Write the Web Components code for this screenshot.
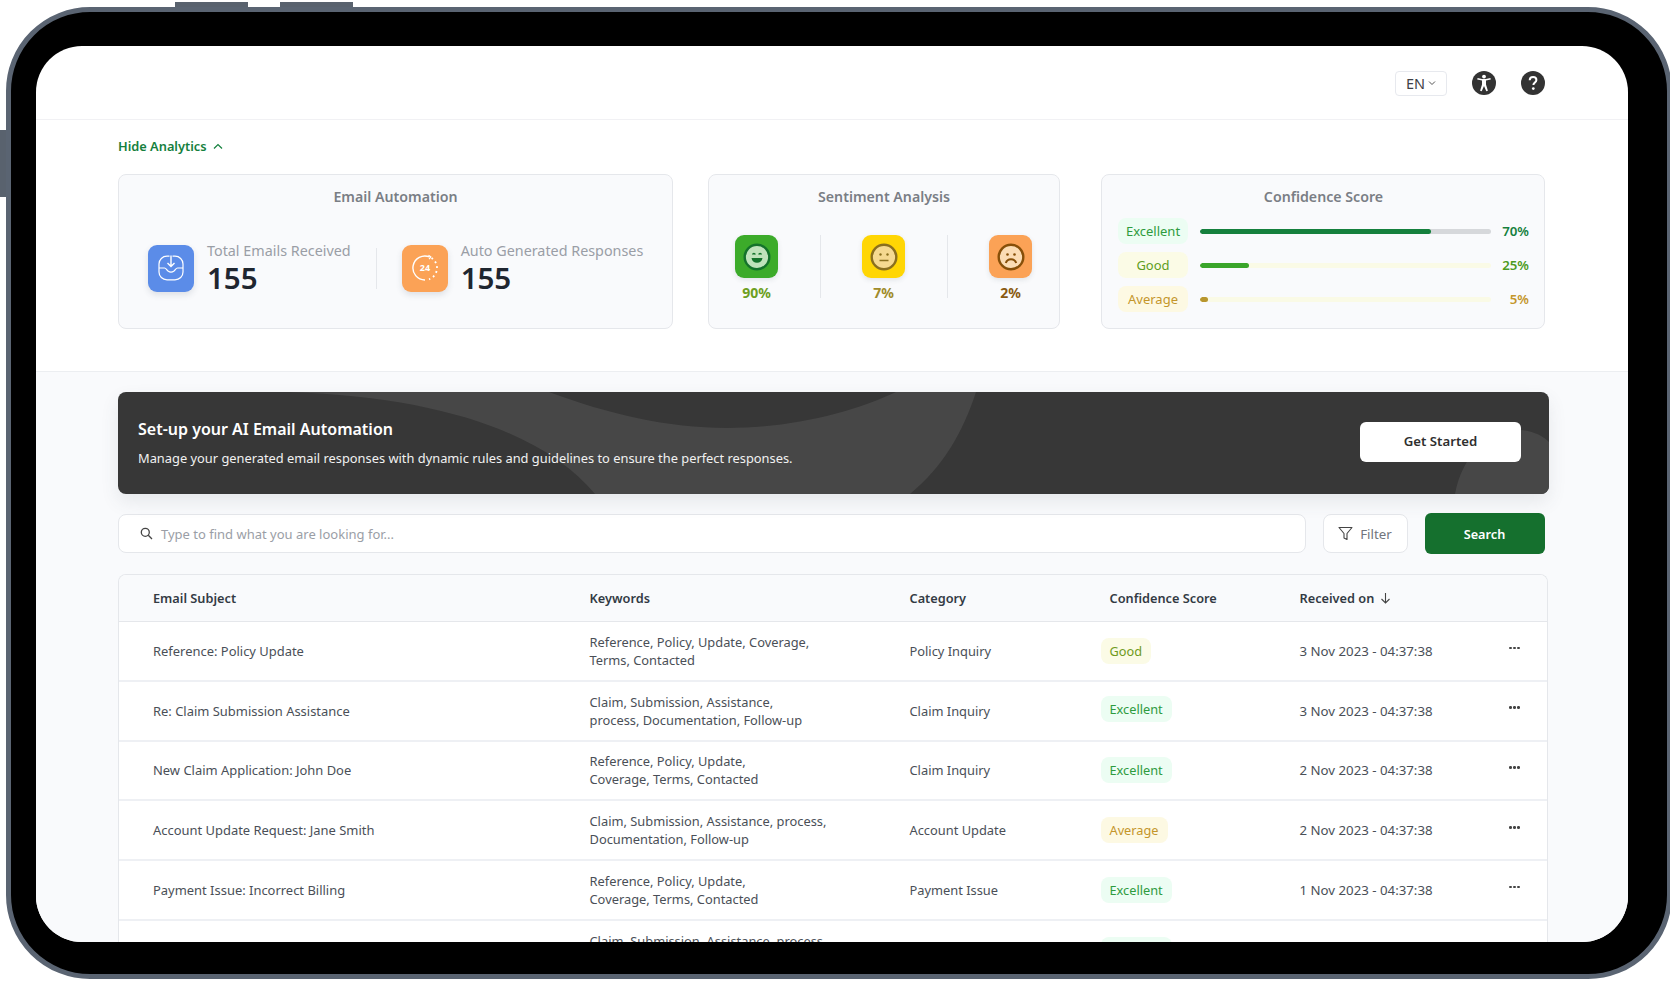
<!DOCTYPE html>
<html lang="en"><head><meta charset="utf-8"><title>Email Automation</title>
<style>
html,body{margin:0;padding:0;background:#fff;overflow:hidden;width:1670px;height:981px;font-family:"Noto Sans","Open Sans",sans-serif}
</style></head><body>
<tablet-frame>
  <app-header></app-header>
  <analytics-panel>
    <dash-card slot="a" heading="Email Automation" style="width:555px">
      <stat-block label="Total Emails Received" value="155" kind="mail"></stat-block>
      <v-rule h="41" style="margin:0 25px 0 25px"></v-rule>
      <stat-block label="Auto Generated Responses" value="155" kind="auto"></stat-block>
    </dash-card>
    <dash-card slot="b" heading="Sentiment Analysis" style="width:352px;margin-left:35px" mode="sent">
      <sent-item pct="90%" kind="happy"></sent-item>
      <v-rule h="63" style="margin:0 41px 0 42px"></v-rule>
      <sent-item pct="7%" kind="neutral"></sent-item>
      <v-rule h="63" style="margin:0 41px 0 42px"></v-rule>
      <sent-item pct="2%" kind="sad"></sent-item>
    </dash-card>
    <conf-card slot="c">
      <conf-row label="Excellent" pct="70%" fill="79.500" tone="excellent"></conf-row>
      <conf-row label="Good" pct="25%" fill="17" tone="good"></conf-row>
      <conf-row label="Average" pct="5%" fill="3" tone="average"></conf-row>
    </conf-card>
  </analytics-panel>
  <work-area>
    <auto-banner></auto-banner>
    <search-bar></search-bar>
    <email-table>
      <email-row score="Good" lift="0">
        <span slot="subject">Reference: Policy Update</span>
        <span slot="keywords">Reference, Policy, Update, Coverage,<br>Terms, Contacted</span>
        <span slot="category">Policy Inquiry</span>
        <span slot="date">3 Nov 2023 - 04:37:38</span>
      </email-row>
      <email-row score="Excellent" lift="3">
        <span slot="subject">Re: Claim Submission Assistance</span>
        <span slot="keywords">Claim, Submission, Assistance,<br>process, Documentation, Follow-up</span>
        <span slot="category">Claim Inquiry</span>
        <span slot="date">3 Nov 2023 - 04:37:38</span>
      </email-row>
      <email-row score="Excellent" lift="0">
        <span slot="subject">New Claim Application: John Doe</span>
        <span slot="keywords">Reference, Policy, Update,<br>Coverage, Terms, Contacted</span>
        <span slot="category">Claim Inquiry</span>
        <span slot="date">2 Nov 2023 - 04:37:38</span>
      </email-row>
      <email-row score="Average" lift="0">
        <span slot="subject">Account Update Request: Jane Smith</span>
        <span slot="keywords">Claim, Submission, Assistance, process,<br>Documentation, Follow-up</span>
        <span slot="category">Account Update</span>
        <span slot="date">2 Nov 2023 - 04:37:38</span>
      </email-row>
      <email-row score="Excellent" lift="0">
        <span slot="subject">Payment Issue: Incorrect Billing</span>
        <span slot="keywords">Reference, Policy, Update,<br>Coverage, Terms, Contacted</span>
        <span slot="category">Payment Issue</span>
        <span slot="date">1 Nov 2023 - 04:37:38</span>
      </email-row>
      <email-row score="Excellent" lift="0">
        <span slot="keywords">Claim, Submission, Assistance, process,<br>Documentation, Follow-up</span>
      </email-row>
    </email-table>
  </work-area>
</tablet-frame>
<script>
const def=(name,css,html)=>{
  customElements.define(name,class extends HTMLElement{
    connectedCallback(){
      if(this.shadowRoot)return;
      const r=this.attachShadow({mode:'open'});
      const a=n=>this.getAttribute(n)||'';
      r.innerHTML='<style>'+css+'</style>'+(typeof html==='function'?html(a):html);
    }
  });
};
const F='font-family:"Noto Sans","Open Sans",sans-serif;';

def('tablet-frame',`
:host{display:block;box-sizing:border-box;width:1666px;height:972px;margin:7px 0 0 6px;position:relative;
 background:#000;border:5px solid #5a6472;border-radius:84px;padding:34px 39px 32px 24.500px;${F}}
.screen{width:1592.500px;height:896px;border-radius:46px;overflow:hidden;background:#fff;display:flex;flex-direction:column}
.btn{position:absolute;background:#59626e}
.t1{left:164px;top:-10px;width:73px;height:5px}
.t2{left:269px;top:-10px;width:73px;height:5px}
.l{left:-11px;top:118px;width:6px;height:67px}
`,`<i class="btn t1"></i><i class="btn t2"></i><i class="btn l"></i><div class="screen"><slot></slot></div>`);

def('app-header',`
:host{display:flex;justify-content:flex-end;align-items:center;box-sizing:border-box;height:74px;flex:none;padding:1px 83px 0 0;gap:25px;border-bottom:1px solid #f1f1f4}
.lang{box-sizing:border-box;width:52px;height:25px;border:1px solid #e7e9ee;border-radius:4px;display:flex;align-items:center;justify-content:center;gap:3px;font-size:14.500px;color:#3f3f46}
svg{display:block}
.i{display:flex;gap:25px}
`,`<div class="lang">EN<svg width="8" height="6" viewBox="0 0 8 6"><path d="M1 1.500 4 4.500 7 1.500" fill="none" stroke="#555" stroke-width="1"/></svg></div>
<div class="i">
<svg width="24" height="24" viewBox="0 0 24 24"><circle cx="12" cy="12" r="12" fill="#333"/><circle cx="12" cy="5.600" r="1.900" fill="#fff"/><path d="M5.200 8.400 10 9.600v4l-1.900 6.200 1.600.5 2.300-5.400 2.300 5.400 1.600-.5L14 13.600v-4l4.800-1.200-.4-1.500-4.400 1.100h-4L5.600 6.900z" fill="#fff"/></svg>
<svg width="24" height="24" viewBox="0 0 24 24"><circle cx="12" cy="12" r="12" fill="#333"/><path d="M8.700 9.300c0-2 1.500-3.300 3.400-3.300 1.900 0 3.300 1.200 3.300 2.900 0 2.500-3 2.500-3 5" fill="none" stroke="#fff" stroke-width="2"/><circle cx="12.300" cy="17.600" r="1.350" fill="#fff"/></svg>
</div>`);

def('analytics-panel',`
:host{display:block;box-sizing:border-box;flex:none;height:252px;padding:0 83px 0 82.500px;background:#fff;border-bottom:1px solid #eceef1}
.toggle{height:54px;box-sizing:border-box;display:flex;align-items:center;gap:6px;color:#15803d;font-size:12.800px;font-weight:600;padding-bottom:2px}
.row{display:flex}
.c{margin-left:auto;display:block}
`,`<div class="toggle">Hide Analytics<svg width="10" height="7" viewBox="0 0 10 7"><path d="M1 5.500 5 1.500 9 5.500" fill="none" stroke="#15803d" stroke-width="1.200"/></svg></div>
<div class="row"><slot name="a"></slot><slot name="b"></slot><div class="c"><slot name="c"></slot></div></div>`);

def('dash-card',`
:host{display:block;box-sizing:border-box;height:155px;background:#f9fafc;border:1px solid #e5e7eb;border-radius:8px}
h3{margin:0;padding-top:12px;height:34px;box-sizing:content-box;text-align:center;font-size:14.200px;line-height:20px;font-weight:600;color:#7a7e85}
.body{display:flex;align-items:center;padding:21px 0 0 29px}
:host([mode=sent]) .body{padding:14px 0 0 26px;align-items:flex-start}
`,a=>`<h3>${a('heading')}</h3><div class="body"><slot></slot></div>`);

def('v-rule',`:host{display:block;width:1px;background:#e5e7eb;flex:none}`,'<span></span>');
customElements.whenDefined('v-rule').then(()=>document.querySelectorAll('v-rule').forEach(e=>e.style.height=e.getAttribute('h')+'px'));

const mail=`<svg width="30" height="30" viewBox="0 0 30 30" fill="none" stroke="#fff" stroke-width="1.200"><path d="M13.500 3.200H11C6.500 3.200 3 6.700 3 11v8c0 4.400 3.500 7.800 8 7.800h8c4.500 0 8-3.400 8-7.800v-8c0-4.300-3.500-7.800-8-7.800h-2.500"/><path d="M3 15h5.500c1.500 0 2.200 2 3.500 3 1.800 1.300 4.200 1.300 6 0 1.300-1 2-3 3.500-3H27"/><path d="M15 2.500V13M11.500 10l3.500 3.500 3.500-3.500" stroke-width="1.400"/></svg>`;
const auto=`<svg width="32" height="32" viewBox="0 0 32 32" fill="none" stroke="#fff" stroke-width="1.400"><path d="M20.500 4.900A12 12 0 1 0 16 28"/><path d="M22.500 5.900A12 12 0 0 1 20 27.300" stroke-width="1.800" stroke-dasharray="1.800 3.200"/><path d="M19.500 3.200l2.300 1.700-1.700 2.300" stroke-width="1.200"/><text x="16" y="19.300" text-anchor="middle" fill="#fff" stroke="none" style="font:700 9px 'Noto Sans',sans-serif">24</text></svg>`;
def('stat-block',`
:host{display:flex;align-items:center;gap:13px}
.ic{width:46px;height:47px;border-radius:9px;display:flex;align-items:center;justify-content:center;box-shadow:0 3px 6px rgba(60,70,90,.14);flex:none}
.mail{background:#5b8ce8}.auto{background:#fba256}
.l{font-size:14.350px;line-height:18px;color:#9a9ea6;white-space:nowrap;margin-bottom:2px}
.v{font-size:29.500px;line-height:32px;font-weight:600;color:#1f2630}
`,a=>`<div class="ic ${a('kind')}">${a('kind')==='mail'?mail:auto}</div><div><div class="l">${a('label')}</div><div class="v">${a('value')}</div></div>`);

const faces={
happy:{bg:'#3cab2a',col:'#14732b',pc:'#6d9f22',svg:`<path d="M9.500 11.500c.6-1.400 2.200-1.400 2.800 0M15.700 11.500c.6-1.400 2.200-1.400 2.800 0" stroke="#14732b" stroke-width="1.500" fill="none"/><path d="M8.500 15h11c-.3 3-2.600 4.800-5.500 4.800S8.800 18 8.500 15z" fill="#14732b"/>`,fill:'#bfe3bb'},
neutral:{bg:'#ffd604',col:'#8a6f1e',pc:'#a08b2a',svg:`<circle cx="10.500" cy="11.500" r="1.200" fill="#8a6f1e"/><circle cx="17.500" cy="11.500" r="1.200" fill="#8a6f1e"/><path d="M9.500 17.500h9" stroke="#8a6f1e" stroke-width="1.500"/>`,fill:'#f5d990'},
sad:{bg:'#fba256',col:'#874f08',pc:'#8a5a12',svg:`<circle cx="10.500" cy="11.500" r="1.300" fill="#874f08"/><circle cx="17.500" cy="11.500" r="1.300" fill="#874f08"/><path d="M8.800 20c.8-2.600 2.900-3.800 5.200-3.800s4.400 1.200 5.200 3.800" stroke="#874f08" stroke-width="2" fill="none"/>`,fill:'#fbdcb4'}};
def('sent-item',`
:host{display:flex;flex-direction:column;align-items:center;width:43px;flex:none}
.ic{width:43px;height:43px;border-radius:9px;display:flex;align-items:center;justify-content:center;box-shadow:0 2px 5px rgba(60,70,90,.12)}
.p{font-size:14px;line-height:20px;margin-top:5px;font-weight:700;white-space:nowrap}
`,a=>{const f=faces[a('kind')];return `<div class="ic" style="background:${f.bg}"><svg width="28" height="28" viewBox="0 0 28 28"><circle cx="14" cy="14" r="12.300" fill="${f.fill}" stroke="${f.col}" stroke-width="2.400"/>${f.svg}</svg></div><div class="p" style="color:${f.pc}">${a('pct')}</div>`});

def('conf-card',`
:host{display:block;box-sizing:border-box;width:444px;height:155px;background:#f9fafc;border:1px solid #e5e7eb;border-radius:8px;padding:12px 15px 0 16px}
h3{margin:0;height:31px;text-align:center;font-size:14.200px;line-height:20px;font-weight:600;color:#7a7e85}
.rows{display:flex;flex-direction:column;gap:8px}
`,`<h3>Confidence Score</h3><div class="rows"><slot></slot></div>`);

const tones={excellent:{bg:'#ecfdf3',tx:'#2e9b3e',track:'#d6d8db',fill:'#15803d',pc:'#15803d'},
good:{bg:'#fbfbe6',tx:'#5f9e22',track:'#fafae6',fill:'#3aa52a',pc:'#4d9a22'},
average:{bg:'#fdf9e3',tx:'#c4962b',track:'#fafae6',fill:'#b8962e',pc:'#c4962b'}};
def('conf-row',`
:host{display:flex;align-items:center;height:26px}
.pill{width:70px;height:26px;border-radius:8px;display:flex;align-items:center;justify-content:center;font-size:13px;flex:none}
.track{width:291px;height:5px;border-radius:3px;margin:0 0 0 11.500px;flex:none;overflow:hidden}
.fill{height:100%;border-radius:3px}
.pc{flex:1;text-align:right;font-size:13.300px;font-weight:600}
`,a=>{const t=tones[a('tone')];return `<div class="pill" style="background:${t.bg};color:${t.tx}">${a('label')}</div><div class="track" style="background:${t.track}"><div class="fill" style="width:${a('fill')}%;background:${t.fill}"></div></div><div class="pc" style="color:${t.pc}">${a('pct')}</div>`});

def('work-area',`:host{display:block;flex:1;min-height:0;background:#f9fafc;padding:20px 79px 0 82.500px;overflow:hidden}`,`<slot></slot>`);

def('auto-banner',`
:host{display:flex;position:relative;box-sizing:border-box;height:102px;background:#373737;border-radius:8px;overflow:hidden;align-items:center;justify-content:space-between;padding:0 28px 0 20px;box-shadow:0 8px 18px rgba(70,75,90,.10)}
svg{position:absolute;inset:0}
.t{position:relative;margin-bottom:2px}
h2{margin:0 0 7px;font-size:16px;line-height:24px;font-weight:600;color:#fff}
p{margin:0;font-size:12.850px;line-height:20px;color:#f1f1f1}
button{position:relative;width:161px;height:40px;border:0;border-radius:6px;background:#fff;color:#2f2f2f;font:600 13.200px/38px "Noto Sans",sans-serif;margin-bottom:3px;padding:0 0 2px}
`,`<svg width="1431" height="102" viewBox="0 0 1431 102"><path d="M171 0H431C490 22 550 36 609 36 675 36 735 20 778 0H858C845 40 825 75 792 102H477C430 45 330 5 171 0Z" fill="#474747"/><path d="M1337 102C1345 60 1375 35 1403 38 1415 39 1425 44 1431 50V102Z" fill="#474747"/></svg>
<div class="t"><h2>Set-up your AI Email Automation</h2><p>Manage your generated email responses with dynamic rules and guidelines to ensure the perfect responses.</p></div><button>Get Started</button>`);

def('search-bar',`
:host{display:flex;align-items:center;height:41px;margin:19px 4px 20px 0;gap:17px}
.in{box-sizing:border-box;width:1187.500px;height:39px;background:#fff;border:1px solid #e5e7eb;border-radius:8px;display:flex;align-items:center;padding-left:21px;gap:8px;color:#9a9ea6;font-size:13px}
.f{box-sizing:border-box;width:85px;height:39px;background:#fff;border:1px solid #e5e7eb;border-radius:8px;display:flex;align-items:center;justify-content:center;gap:7px;color:#71757c;font-size:13.300px}
.s{width:120px;height:41px;border-radius:6px;background:#15702e;color:#fff;display:flex;align-items:center;justify-content:center;font-size:12.700px;font-weight:600}
`,`<div class="in"><svg width="13" height="13" viewBox="0 0 13 13" fill="none" stroke="#444" stroke-width="1.300"><circle cx="5.300" cy="5.300" r="4"/><path d="M8.300 8.300 12 12"/></svg>Type to find what you are looking for...</div>
<div class="f"><svg width="15" height="15" viewBox="0 0 15 15" fill="none" stroke="#444" stroke-width="1.100" stroke-linejoin="round"><path d="M1 1.500h13L9 7.500v6l-3-1.500V7.500z"/></svg>Filter</div><div class="s">Search</div>`);

const cols='436.500px 320px 200px 190px 200px 30px';
def('email-table',`
:host{display:block;box-sizing:border-box;width:1430px;background:#fff;border:1px solid #e5e7eb;border-bottom:0;border-radius:8px 8px 0 0;overflow:hidden}
.h{display:grid;grid-template-columns:${cols};padding-left:34px;box-sizing:border-box;height:47px;align-items:center;background:#f9fafc;border-bottom:1px solid #e5e7eb;font-size:12.750px;font-weight:600;color:#333a44}
.h span{display:flex;align-items:center;gap:6px}
`,`<div class="h"><span>Email Subject</span><span>Keywords</span><span>Category</span><span>Confidence Score</span><span>Received on<svg width="11" height="12" viewBox="0 0 11 12" fill="none" stroke="#444" stroke-width="1.100"><path d="M5.500 1v10M1.500 7l4 4 4-4"/></svg></span></div><slot></slot>`);

const pill={Good:['#fbfbe6','#6f9a1c'],Excellent:['#ecfdf3','#2e9b3e'],Average:['#fdf9e3','#c4962b']};
def('email-row',`
:host{display:grid;grid-template-columns:${cols};padding-left:34px;box-sizing:border-box;height:59.800px;align-items:center;background:#fff;border-bottom:2px solid #eef0f4;font-size:12.850px;line-height:18px;color:#4a4f57}
::slotted([slot=subject]){font-size:12.950px}
::slotted([slot=date]){font-size:13.250px}
.p{display:inline-flex;align-items:center;height:26px;padding:0 9px;border-radius:8px;margin-left:-9px;font-size:12.750px}
.d{display:flex;justify-content:center;gap:1.500px;margin-bottom:6px}
.d i{width:2.500px;height:2.500px;border-radius:50%;background:#444}
`,a=>{const p=pill[a('score')];return `<div><slot name="subject"></slot></div><div><slot name="keywords"></slot></div><div><slot name="category"></slot></div><div><span class="p" style="background:${p[0]};color:${p[1]};margin-bottom:${a('lift')}px">${a('score')}</span></div><div><slot name="date"></slot></div><div class="d"><i></i><i></i><i></i></div>`});
</script>
</body></html>
